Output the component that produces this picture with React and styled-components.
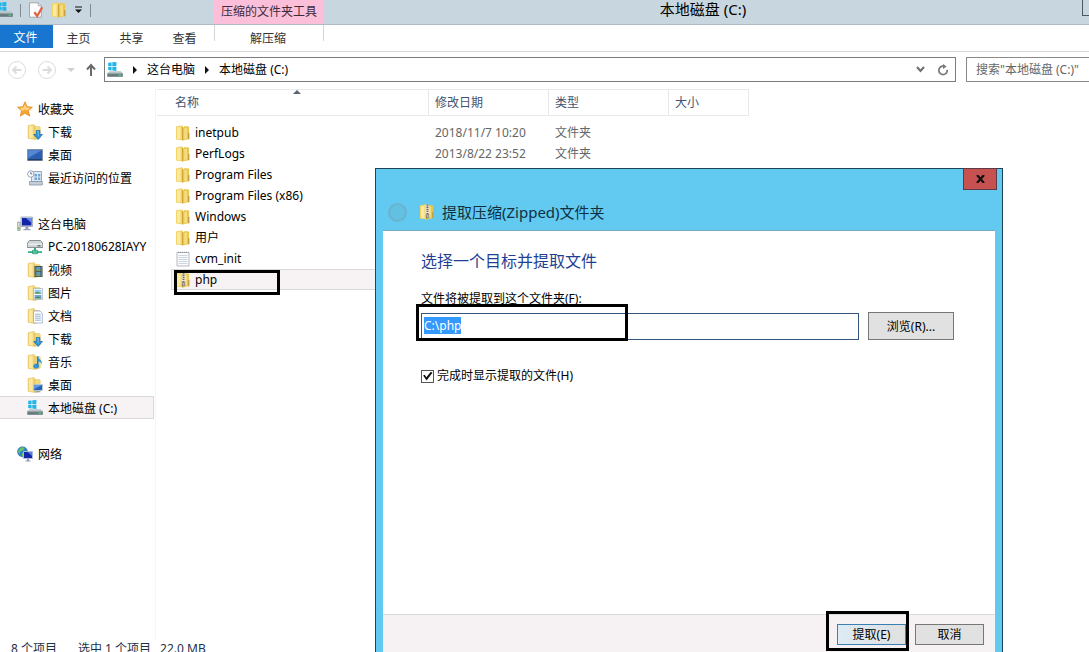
import React, {useEffect, useRef, useState} from 'react'
import styled, {createGlobalStyle, css} from 'styled-components';

/* ---------- icons ---------- */

const FolderShape = () => (
    <>
        <path d="M1 1.5 7 .3 8 1.5V15.6L1 14.4z" fill="#f2d469" />
        <path d="M2 2.4 5.5 1.7v12.6L2 13.7z" fill="#f9e9a2" />
        <path d="M8 2.4 9.2 1.3h4l.9 1V14L8 15.6z" fill="#ebc64e" />
        <path d="M9.2 3.2 12 2.6v11l-2.800.8z" fill="#f5dc7c" />
        <path d="M7.500 2V15.300" stroke="#cfa538" strokeWidth="1" />
        <path d="M13 8h1.400v6l-1.400.4z" fill="#c8a040" />
    </>
)

const FolderIcon = () => (
    <Icon viewBox="0 0 16 16"><FolderShape /></Icon>
)

const ZipIcon = () => (
    <Icon viewBox="0 0 16 16">
        <FolderShape />
        <path d="M8.500.5v11" stroke="#f3ecd0" strokeWidth="3.400" />
        <path d="M8.500.5v11" stroke="#6d6656" strokeWidth="2" strokeDasharray="1.300 .8" />
        <path d="M7.300 10.500h2.400v3.300H7.300z" fill="#b9b9b9" stroke="#666" strokeWidth=".6" />
    </Icon>
)

const PlainFolder = ({children}) => (
    <Icon viewBox="0 0 16 16">
        <path d="M1 1.500 7 .4l1 1.200v14L1 14.400z" fill="#f0d273" stroke="#dfbd5c" strokeWidth=".4" />
        <path d="M2 2.300 5.600 1.600v12.800L2 13.700z" fill="#fae9a6" />
        <path d="M8 2.500h4.500l.8.8V14L8 15.600z" fill="#f3d97d" stroke="#d9b552" strokeWidth=".4" />
        {children}
    </Icon>
)

const DownloadIcon = () => (
    <PlainFolder>
        <path d="M9.300 6.500h3.600v4h2.600l-4.400 5-4.400-5h2.600z" fill="#2b95dc" stroke="#1668ab" strokeWidth=".7" />
        <path d="M10.200 7.300h1v5" stroke="#8ccdf5" strokeWidth=".8" fill="none" />
    </PlainFolder>
)

const VideoIcon = () => (
    <PlainFolder>
        <path d="M7.500 4h8v11h-8z" fill="#2d3338" />
        <path d="M9.200 4.800h4.400v4.400H9.200zM9.200 10h4.400v4.200H9.200z" fill="#5c9fcb" />
        <path d="M9.200 8 11 6.500l2.600 2v.7H9.200zM9.200 13l2-1.400 2.400 1.600v1H9.200z" fill="#7da05a" />
        <path d="M8.300 4.500v10.400M14.600 4.500v10.400" stroke="#e6e9ea" strokeWidth=".8" strokeDasharray="1 1" />
    </PlainFolder>
)

const PictureIcon = () => (
    <PlainFolder>
        <path d="M6.500 3.500h9v11h-9z" fill="#fff" stroke="#8ba4ba" strokeWidth=".6" />
        <path d="M7.600 4.700h6.800v3.800H7.600z" fill="#9ccced" />
        <path d="M7.600 8 10 6.600l4.400 1.600v.6H7.600z" fill="#5c965b" />
        <path d="M7.600 10h6.800v3.400H7.600z" fill="#6aa5d3" />
        <path d="m7.600 13 3-1.500 3.800 1.200v.7H7.600z" fill="#55875d" />
    </PlainFolder>
)

const DocumentIcon = () => (
    <PlainFolder>
        <path d="M6.500 3h6.500l2.300 2.200V15H6.500z" fill="#fff" stroke="#8c9fc2" strokeWidth=".7" />
        <path d="M8 6.200h5.800M8 8.200h5.800M8 10.200h5.800M8 12.200h5.800" stroke="#8ea6ce" strokeWidth=".9" />
    </PlainFolder>
)

const MusicIcon = () => (
    <PlainFolder>
        <path d="M10.700 2.500v9" stroke="#1c7dbe" strokeWidth="1.600" />
        <path d="M10.700 2.500c.4 2.600 5.300 3.300 4.200 8.300 0-2.300-2.400-3.200-4.200-3.600z" fill="#2e9ade" />
        <ellipse cx="9.200" cy="12.200" rx="2.600" ry="2.100" fill="#2e9ade" stroke="#1a6ba6" strokeWidth=".5" />
    </PlainFolder>
)

const DesktopFolderIcon = () => (
    <PlainFolder>
        <path d="M6.500 7.500h9v6h-9z" fill="#2563b8" stroke="#c9d5e2" strokeWidth=".7" />
        <path d="M7 8h8l-8 4.200z" fill="#5f9ae0" />
        <path d="M8.500 14.800h5" stroke="#7b8ea5" strokeWidth="1" />
    </PlainFolder>
)

const StarIcon = () => (
    <Icon viewBox="0 0 16 16">
        <path d="m8 .8 2.100 4.900 5.300.5-4 3.600 1.300 5.300L8 12.300l-4.700 2.800 1.300-5.300-4-3.600 5.300-.5z" fill="#f8a52f" stroke="#e38a1c" strokeWidth=".8" strokeLinejoin="round" />
        <path d="m8 3 1.400 3.500 3.800.4-2.800 2.500L8 8.500 5.300 9.700 2.800 7l3.800-.5z" fill="#fdd480" />
    </Icon>
)

const DesktopIcon = () => (
    <Icon viewBox="0 0 16 16">
        <path d="M.5 2.500h15v11H.5z" fill="#2a5fb4" stroke="#8793a4" />
        <path d="M1.200 3.200h13.600L1.200 11z" fill="#5588d0" />
        <path d="M1 12.800h14" stroke="#20324e" strokeWidth="1" />
    </Icon>
)

const RecentIcon = () => (
    <Icon viewBox="0 0 16 16">
        <path d="M4.500 1.500h10v10h-10z" fill="#dfeaf4" stroke="#8295aa" strokeWidth=".8" />
        <path d="M7.500 4h2.500v2.500H7.500zM11 4h2.300v2.500H11zM7.500 7.500h2.500v2.500H7.500zM11 7.500h2.300v2.500H11z" fill="#74a3cf" />
        <path d="M2.500 11.500h12.800v3.500H2.500z" fill="#c3ced8" stroke="#8796a5" strokeWidth=".8" />
        <circle cx="3.800" cy="4" r="3.200" fill="#fff" stroke="#8a9cb4" strokeWidth=".9" />
        <path d="M3.800 2v2h1.600" stroke="#3d5b86" strokeWidth=".8" fill="none" />
    </Icon>
)

const ComputerIcon = () => (
    <Icon viewBox="0 0 16 16">
        <path d="M4 1h11.500v9.500H4z" fill="#d2d8e4" stroke="#8d99ae" strokeWidth=".7" />
        <path d="M5 2h9.500v7.500H5z" fill="#1424a8" />
        <path d="M9 2h5.500v5z" fill="#6a8be8" />
        <path d="M8.400 10.500h3V13h-3zM6.500 13h7v1.300h-7z" fill="#98a4b5" />
        <path d="M.6 6h2.600v8.500H.6z" fill="#d5ddd2" stroke="#7e8d7d" strokeWidth=".6" />
        <path d="M1.200 11.500h1.400v1.800H1.200z" fill="#57a447" />
    </Icon>
)

const NetDriveIcon = () => (
    <Icon viewBox="0 0 16 16">
        <path d="m1.500 2.500 1-1h11l1 1L15.800 5v3.500H.2V5z" fill="#cfd4d6" stroke="#70787b" strokeWidth=".8" />
        <path d="M1 5.200h14" stroke="#fff" strokeWidth=".8" />
        <path d="M10.500 6.800h3" stroke="#49555b" strokeWidth="1.100" />
        <path d="M7 9h2v3H7zM1 12.200h14v1.800H1z" fill="#2fae86" />
        <path d="M5.500 11.200h5v3.600h-5z" fill="#4cc6a0" stroke="#20805f" strokeWidth=".5" />
    </Icon>
)

const DriveIcon = () => (
    <Icon viewBox="0 0 16 16">
        <path d="M1.200.8 4.600.4v3.700H1.200zM5.300.3 9.400 0v4.100H5.300zM1.200 4.800h3.400v3.600l-3.400-.3zM5.300 4.800h4.100V9l-4.100-.5z" fill="#22b4ea" />
        <path d="M2.500 9.300h11.300l2 1.900H.4z" fill="#b8c3c6" />
        <path d="M.3 11.200h15.500v3.600H.3z" fill="#66787c" />
        <path d="M.8 11.700h14.400" stroke="#a4b1b4" strokeWidth=".7" />
        <path d="M11.600 13.200h2.600" stroke="#59d98a" strokeWidth="1.100" />
    </Icon>
)

const NetworkIcon = () => (
    <Icon viewBox="0 0 16 16">
        <circle cx="5.500" cy="5.800" r="5" fill="#2d86c9" stroke="#1d5f96" strokeWidth=".5" />
        <path d="M2 3.500c2-2.600 4.500-2.600 5.500-1.200L6 4.400 3.400 5.200 2.600 8C1 7 1 5 2 3.500zM5 7l3 .8-1 2.800-2-.6z" fill="#6cc068" />
        <path d="M6.500 5.500h9v7h-9z" fill="#1728a6" stroke="#b7c3d4" strokeWidth=".9" />
        <path d="M10.500 6h4.600v4z" fill="#5c80e4" />
        <path d="M10 12.800h2V15h-2zM8.500 14.500h5v1h-5z" fill="#8f9db0" />
    </Icon>
)

const TextFileIcon = () => (
    <Icon viewBox="0 0 16 16">
        <path d="M2 1.500h12v13.500H2z" fill="#fbfcfd" stroke="#a2a7ad" strokeWidth=".8" />
        <path d="M3.500 4.500h9M3.500 6.500h9M3.500 8.500h9M3.500 10.500h9M3.500 12.500h9" stroke="#c4cad8" strokeWidth=".8" />
        <path d="M3 1.300h10.500" stroke="#7f8994" strokeWidth="1" strokeDasharray="1 1" />
    </Icon>
)

const PropertiesIcon = () => (
    <Icon viewBox="0 0 16 16">
        <path d="M1.500.8h8.800l3 3V15.200H1.500z" fill="#fdfdfd" stroke="#8e979d" strokeWidth=".8" />
        <path d="M10.300.8v3h3" fill="#dfe4e7" stroke="#8e979d" strokeWidth=".7" />
        <path d="m6.300 10.300 2.900 3.700 5-8.700" fill="none" stroke="#df6440" strokeWidth="2.300" />
    </Icon>
)

const NavArrow = ({flip}) => (
    <svg width="20" height="20" viewBox="0 0 20 20" aria-hidden="true">
        <circle cx="10" cy="10" r="8.500" fill="none" stroke="#dcdcdc" />
        <path
            d={flip ? 'M5.500 10h8.500M10.500 6.500 14 10l-3.500 3.500' : 'M14.500 10H6M9.500 6.500 6 10l3.500 3.500'}
            fill="none"
            stroke="#dcdcdc"
            strokeWidth="2"
        />
    </svg>
)

const UpArrow = () => (
    <svg width="12" height="14" viewBox="0 0 12 14" aria-hidden="true">
        <path d="M6 13V2M2 6.500 6 2l4 4.500" fill="none" stroke="#6a6a6a" strokeWidth="2" />
    </svg>
)

const Crumb = () => (
    <svg width="4" height="8" viewBox="0 0 4 8" aria-hidden="true"><path d="M0 0v8l4-4z" fill="#111" /></svg>
)

/* ---------- data ---------- */

const sections = [
    {
        title: '收藏夹', icon: StarIcon,
        items: [
            {label: '下载', icon: DownloadIcon},
            {label: '桌面', icon: DesktopIcon},
            {label: '最近访问的位置', icon: RecentIcon},
        ],
    },
    {
        title: '这台电脑', icon: ComputerIcon,
        items: [
            {label: 'PC-20180628IAYY', icon: NetDriveIcon},
            {label: '视频', icon: VideoIcon},
            {label: '图片', icon: PictureIcon},
            {label: '文档', icon: DocumentIcon},
            {label: '下载', icon: DownloadIcon},
            {label: '音乐', icon: MusicIcon},
            {label: '桌面', icon: DesktopFolderIcon},
            {label: '本地磁盘 (C:)', icon: DriveIcon, selected: true},
        ],
    },
    {title: '网络', icon: NetworkIcon, items: []},
]

const files = [
    {name: 'inetpub', date: '2018/11/7 10:20', type: '文件夹', icon: FolderIcon},
    {name: 'PerfLogs', date: '2013/8/22 23:52', type: '文件夹', icon: FolderIcon},
    {name: 'Program Files', icon: FolderIcon},
    {name: 'Program Files (x86)', icon: FolderIcon},
    {name: 'Windows', icon: FolderIcon},
    {name: '用户', icon: FolderIcon},
    {name: 'cvm_init', icon: TextFileIcon},
    {name: 'php', icon: ZipIcon, selected: true},
]

function ExtractDialog() {
    const [path, setPath] = useState('C:\\php');
    const [showFiles, setShowFiles] = useState(true);
    const pathRef = useRef(null);

    useEffect(() => {
        pathRef.current.focus();
        pathRef.current.select();
    }, [])

    return (
        <Dialog role="dialog" aria-labelledby="dialog-title">
            <CloseButton type="button" aria-label="关闭">
                <svg width="9" height="8" viewBox="0 0 9 8" aria-hidden="true">
                    <path d="m1 0 7 8M8 0 1 8" stroke="#111" strokeWidth="2.200" />
                </svg>
            </CloseButton>
            <DialogHeader>
                <BackButton type="button" aria-label="返回" disabled />
                <ZipIcon />
                <DialogTitle id="dialog-title">提取压缩(Zipped)文件夹</DialogTitle>
            </DialogHeader>
            <DialogBody>
                <Heading>选择一个目标并提取文件</Heading>
                <FieldLabel htmlFor="target">文件将被提取到这个文件夹(F):</FieldLabel>
                <FieldRow>
                    <PathInput id="target" ref={pathRef} value={path} onChange={(e) => setPath(e.target.value)} />
                    <Button type="button" $large>浏览(R)...</Button>
                    <PathMark />
                </FieldRow>
                <CheckLabel>
                    <CheckBox type="checkbox" checked={showFiles} onChange={(e) => setShowFiles(e.target.checked)} />
                    完成时显示提取的文件(H)
                </CheckLabel>
            </DialogBody>
            <DialogFooter>
                <Marked>
                    <Button type="button" $primary>提取(E)</Button>
                    <ButtonMark />
                </Marked>
                <Button type="button">取消</Button>
            </DialogFooter>
        </Dialog>
    )
}

function App() {
    return (
        <Explorer>
            <GlobalStyle />
            <TitleBar>
                <QuickAccess>
                    <DriveIcon />
                    <Divider />
                    <PropertiesIcon />
                    <FolderIcon />
                    <svg width="9" height="8" viewBox="0 0 9 8" aria-hidden="true">
                        <path d="M1 1h7" stroke="#111" strokeWidth="1" />
                        <path d="M1 3.500h7L4.500 7z" fill="#111" />
                    </svg>
                    <Divider />
                </QuickAccess>
                <ContextGroup>压缩的文件夹工具</ContextGroup>
                <WindowTitle>本地磁盘 (C:)</WindowTitle>
                <MinimizeButton type="button" aria-label="最小化" />
            </TitleBar>
            <Ribbon>
                <FileTab type="button">文件</FileTab>
                <Tab type="button">主页</Tab>
                <Tab type="button">共享</Tab>
                <Tab type="button">查看</Tab>
                <ContextTab type="button">解压缩</ContextTab>
            </Ribbon>
            <AddressRow>
                <NavButtons>
                    <IconButton type="button" aria-label="后退"><NavArrow /></IconButton>
                    <IconButton type="button" aria-label="前进"><NavArrow flip /></IconButton>
                    <IconButton type="button" aria-label="最近浏览的位置">
                        <svg width="8" height="4" viewBox="0 0 8 4" aria-hidden="true"><path d="M0 0h8L4 4z" fill="#d0d0d0" /></svg>
                    </IconButton>
                    <IconButton type="button" aria-label="上移"><UpArrow /></IconButton>
                </NavButtons>
                <AddressBox>
                    <DriveIcon />
                    <Crumb />
                    <CrumbLink href="#pc">这台电脑</CrumbLink>
                    <Crumb />
                    <CrumbLink href="#c">本地磁盘 (C:)</CrumbLink>
                    <AddressTools>
                        <IconButton type="button" aria-label="展开">
                            <svg width="9" height="7" viewBox="0 0 9 7" aria-hidden="true">
                                <path d="m1 1 3.500 4L8 1" fill="none" stroke="#6e6e6e" strokeWidth="2" />
                            </svg>
                        </IconButton>
                        <IconButton type="button" aria-label="刷新">
                            <svg width="12" height="12" viewBox="0 0 12 12" aria-hidden="true">
                                <path d="M7 2.200H5.500a4.200 4.200 0 1 0 4.700 3.600" fill="none" stroke="#777" strokeWidth="1.700" />
                                <path d="M6 0v5l3.600-2.600z" fill="#777" />
                            </svg>
                        </IconButton>
                    </AddressTools>
                </AddressBox>
                <SearchBox type="text" aria-label="搜索" placeholder={'搜索"本地磁盘 (C:)"'} />
            </AddressRow>
            <Content>
                <Sidebar>
                    {sections.map((section) => (
                        <Section key={section.title}>
                            <SideLink href="#section"><section.icon />{section.title}</SideLink>
                            {section.items.map((item) => (
                                <SideLink key={item.label} href="#item" $child $selected={item.selected}>
                                    <item.icon />{item.label}
                                </SideLink>
                            ))}
                        </Section>
                    ))}
                </Sidebar>
                <Main>
                    <FileTable>
                        <colgroup>
                            <Col $width={272} />
                            <Col $width={120} />
                            <Col $width={120} />
                            <Col $width={80} />
                        </colgroup>
                        <thead>
                            <tr>
                                <HeadCell $first>
                                    名称
                                    <SortArrow viewBox="0 0 8 4" aria-hidden="true"><path d="M4 0 8 4H0z" fill="#5a6470" /></SortArrow>
                                </HeadCell>
                                <HeadCell>修改日期</HeadCell>
                                <HeadCell>类型</HeadCell>
                                <HeadCell>大小</HeadCell>
                            </tr>
                        </thead>
                        <tbody>
                            {files.map((file) => (
                                <tr key={file.name}>
                                    <Cell>
                                        <FileName $selected={file.selected}>
                                            <file.icon />{file.name}
                                            {file.selected && <FileMark />}
                                        </FileName>
                                    </Cell>
                                    <Cell>{file.date}</Cell>
                                    <Cell>{file.type}</Cell>
                                    <Cell />
                                </tr>
                            ))}
                        </tbody>
                    </FileTable>
                </Main>
            </Content>
            <StatusBar>
                <span>8 个项目</span>
                <Selection>
                    <span>选中 1 个项目</span>
                    <span>22.0 MB</span>
                </Selection>
            </StatusBar>
            <ExtractDialog />
        </Explorer>
    )
}

export default App

/* ---------- styles ---------- */

const GlobalStyle = createGlobalStyle`
* {
    box-sizing: border-box;
}
body {
    margin: 0;
    background: #fff;
}
body, button, input {
    font-family: "Noto Sans", "Noto Sans CJK SC", sans-serif;
    font-size: 12px;
    color: #000;
}
button {
    padding: 0;
    border: none;
    background: none;
}
a {
    color: inherit;
    text-decoration: none;
}
`

const Icon = styled.svg`
width: 16px;
height: 16px;
flex: none;
`

const Explorer = styled.div`
position: relative;
display: flex;
flex-direction: column;
height: 100vh;
overflow: hidden;
white-space: nowrap;
`

const TitleBar = styled.header`
display: flex;
flex: none;
height: 25px;
background: #c8d7df;
border-bottom: 1px solid #b0bcc2;
`

const QuickAccess = styled.div`
display: flex;
align-items: center;
flex: none;
gap: 7px;
width: 214px;
padding-bottom: 4px;
margin-left: -3px;
margin-right: 3px;
`

const Divider = styled.span`
width: 1px;
height: 13px;
background: #7f8b91;
`

const ContextGroup = styled.div`
flex: none;
width: 110px;
line-height: 24px;
text-align: center;
color: #3f2b38;
background: #fcbfd9;
`

const WindowTitle = styled.h1`
flex: 1;
margin: 0;
font-size: 15px;
font-weight: 400;
line-height: 18px;
text-align: center;
`

const MinimizeButton = styled.button`
width: 7px;
height: 16px;
&& {
    border-left: 1px solid #4d585e;
    border-bottom: 1px solid #4d585e;
}
`

const Ribbon = styled.nav`
display: flex;
flex: none;
height: 27px;
border-bottom: 1px solid #d5d7d8;
`

const Tab = styled.button`
width: 53px;
height: 26px;
&& {
    padding-right: 2px;
    color: #333;
}
`

const FileTab = styled(Tab)`
height: 23px;
&& {
    color: #fff;
    background: #1976d0;
}
`

const ContextTab = styled(Tab)`
width: 110px;
margin-left: 2px;
border-style: solid;
border-width: 0 1px;
border-image: linear-gradient(#d3d5d6 60%, transparent 60%) 1;
`

const AddressRow = styled.div`
display: flex;
flex: none;
height: 37px;
padding: 5px 0 7px;
`

const NavButtons = styled.div`
display: flex;
align-items: center;
gap: 10px;
width: 104px;
padding-left: 7px;
`

const IconButton = styled.button`
display: flex;
align-items: center;
justify-content: center;
`

const AddressBox = styled.div`
display: flex;
align-items: center;
flex: 1;
gap: 10px;
padding: 0 6px 0 2px;
border: 1px solid #7c7c7c;
`

const CrumbLink = styled.a`
line-height: 20px;
`

const AddressTools = styled.div`
display: flex;
gap: 12px;
margin-left: auto;
`

const SearchBox = styled.input`
width: 123px;
margin-left: 10px;
padding: 0 0 0 9px;
border: 1px solid #8a8a8a;
border-right: none;
border-radius: 0;
outline: none;
&::placeholder {
    color: #666;
}
`

const Content = styled.div`
display: flex;
flex: 1;
min-height: 0;
`

const Sidebar = styled.nav`
flex: none;
width: 156px;
padding: 8px 1px 0 0;
border-right: 1px solid #f4f5f7;
`

const Section = styled.div`
margin-bottom: 23px;
`

const SideLink = styled.a`
display: flex;
align-items: center;
gap: 5px;
height: 23px;
padding-left: ${(p) => (p.$child ? 27 : 17)}px;
border: 1px solid transparent;
border-left: none;
${(p) => p.$selected && css`
    background: #f7f3f5;
    border-color: #d9d9d9;
`}
`

const Main = styled.main`
flex: 1;
min-width: 0;
`

const FileTable = styled.table`
table-layout: fixed;
width: 592px;
margin-left: 1px;
border-spacing: 0;
tbody::before {
    content: '';
    display: block;
    height: 6px;
}
`

const Col = styled.col`
width: ${(p) => p.$width}px;
`

const HeadCell = styled.th`
position: relative;
height: 27px;
padding: 0 0 2px ${(p) => (p.$first ? 18 : 6)}px;
font-weight: 400;
text-align: left;
color: #44546e;
border: 1px solid #e6e8ea;
border-left: none;
`

const SortArrow = styled.svg`
position: absolute;
top: 0;
left: 50%;
width: 8px;
height: 4px;
`

const Cell = styled.td`
height: 21px;
padding: 0 0 0 6px;
line-height: 17px;
color: #666;
&:first-child {
    padding-left: 14px;
    color: #000;
}
`

const FileName = styled.div`
position: relative;
display: flex;
align-items: center;
gap: 4px;
height: 21px;
padding-left: 3px;
border: 1px solid transparent;
${(p) => p.$selected && css`
    background: #f7f3f5;
    border-color: #d9d9d9;
`}
`

/* thick black frames drawn over the things to click */
const Mark = styled.span`
position: absolute;
border: 3px solid #000;
pointer-events: none;
`

const FileMark = styled(Mark)`
top: 0;
left: 2px;
width: 106px;
height: 25px;
`

const PathMark = styled(Mark)`
top: -8px;
left: -5px;
width: 212px;
height: 37px;
`

const ButtonMark = styled(Mark)`
top: -13px;
left: -11px;
width: 83px;
height: 40px;
`

const StatusBar = styled.footer`
display: flex;
flex: none;
gap: 21px;
height: 12px;
padding-left: 11px;
line-height: 18px;
color: #1e3247;
`

const Selection = styled.div`
display: flex;
gap: 9px;
`

const Dialog = styled.section`
position: absolute;
top: 168px;
left: 375px;
bottom: -8px;
display: flex;
flex-direction: column;
width: 628px;
padding: 0 7px 7px;
background: #62caf0;
border: 1px solid #1d4556;
`

const CloseButton = styled.button`
position: absolute;
top: -1px;
right: 5px;
display: flex;
align-items: center;
justify-content: center;
width: 34px;
height: 22px;
&& {
    background: #c75050;
    border: 1px solid #5d3a46;
}
`

const DialogHeader = styled.div`
display: flex;
align-items: flex-end;
flex: none;
gap: 12px;
height: 62px;
padding: 0 5px 8px;
border-bottom: 1px solid #7aa9bd;
svg {
    margin-bottom: 2px;
}
`

const BackButton = styled.button`
width: 19px;
height: 19px;
&& {
    background: #62c0e3;
    border: 2px solid #69b3cf;
    border-radius: 50%;
}
`

const DialogTitle = styled.h2`
margin: 0 0 0 -5px;
font-size: 15px;
font-weight: 400;
line-height: 20px;
color: #10303f;
`

const DialogBody = styled.div`
flex: 1;
padding: 18px 41px 0 38px;
background: #fff;
`

const Heading = styled.h3`
margin: 0 0 17px;
font-size: 16px;
font-weight: 400;
line-height: 24px;
color: #1f3f94;
`

const FieldLabel = styled.label`
display: block;
line-height: 18px;
`

const FieldRow = styled.div`
position: relative;
display: flex;
align-items: center;
gap: 9px;
margin: 4px 0 27px;
`

const PathInput = styled.input`
flex: 1;
min-width: 0;
height: 27px;
padding: 0 2px 2px;
border: 1px solid #34567d;
outline: none;
&::selection {
    color: #fff;
    background: #3399ff;
}
`

const Button = styled.button`
width: ${(p) => (p.$large ? 86 : 69)}px;
height: ${(p) => (p.$large ? 28 : 21)}px;
&& {
    padding-bottom: 1px;
    background: ${(p) => (p.$primary ? 'linear-gradient(90deg, #dcebf5, #e0e0e0)' : '#e1e1e1')};
    border: 1px solid ${(p) => (p.$primary ? '#3c7fb1' : '#777')};
}
`

const CheckLabel = styled.label`
display: flex;
align-items: center;
gap: 3px;
line-height: 18px;
`

const CheckBox = styled.input`
appearance: none;
width: 13px;
height: 13px;
margin: 0;
border: 1px solid #555;
&:checked::after {
    content: '';
    display: block;
    width: 11px;
    height: 11px;
    background: #111;
    clip-path: polygon(10% 45%, 25% 38%, 40% 62%, 80% 12%, 95% 20%, 42% 90%);
}
`

const DialogFooter = styled.div`
display: flex;
flex: none;
justify-content: flex-end;
gap: 9px;
height: 38px;
padding: 9px 11px 0;
background: #f6f2f4;
border-top: 1px solid #dcdcdc;
`

const Marked = styled.div`
position: relative;
`
